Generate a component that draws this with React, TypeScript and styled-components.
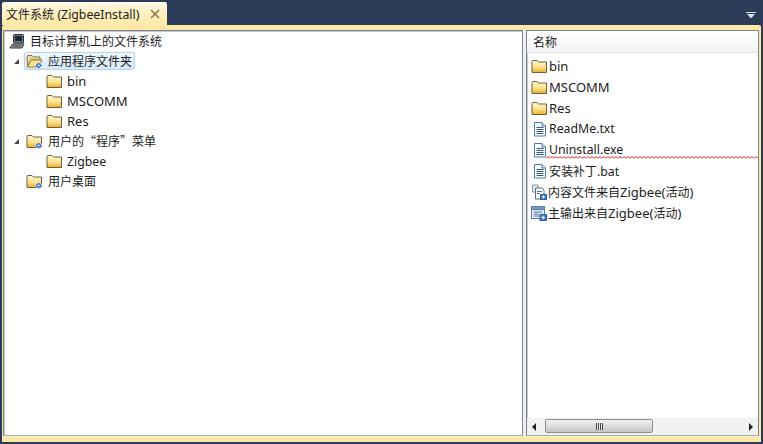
import styled, { createGlobalStyle } from "styled-components";

const Global = createGlobalStyle`
  html, body { margin: 0; padding: 0; background: #2b3b58; }
  body { font-family: "Noto Sans", "Noto Sans CJK SC", sans-serif; font-size: 13px; color: #1c1c1c; }
`;

const Page = styled.div`
  width: 763px;
  height: 444px;
  box-sizing: border-box;
  padding: 0 2px 2px;
  background: #2b3b58;
  display: flex;
  flex-direction: column;
  overflow: hidden;
`;

const TabStrip = styled.div`
  height: 25px;
  flex: none;
  box-sizing: border-box;
  padding-top: 2px;
  display: flex;
  align-items: stretch;
  justify-content: space-between;
`;

const Tab = styled.div`
  width: 165px;
  box-sizing: border-box;
  padding: 0 7px 0 4px;
  display: flex;
  align-items: center;
  justify-content: space-between;
  background: linear-gradient(#fffbe9, #fff0c2 45%, #ffe8a6);
  border-radius: 2px 2px 0 0;
  white-space: nowrap;
`;

const TabMenu = styled.div`
  width: 13px;
  margin-right: 2px;
  padding-top: 4px;
  display: flex;
  align-items: center;
`;

const Doc = styled.div`
  flex: 1;
  min-height: 0;
  box-sizing: border-box;
  padding: 5px 2px 6px 1px;
  background: #ffe8a6;
  border-radius: 2px 2px 0 0;
  display: flex;
`;

const Panes = styled.div`
  display: flex;
  flex: 1;
  min-width: 0;
  background: #f0f0f0;
  gap: 3px;
`;

const Pane = styled.div<{ $width?: number }>`
  ${(p) => (p.$width ? `width: ${p.$width}px; flex: none;` : "flex: 1;")}
  box-sizing: border-box;
  border: 1px solid #7b818d;
  border-bottom-color: #aab0a8;
  box-shadow: inset 1px 1px 0 #c4c8cf, 0 1px 0 #eef3e6;
  background: #fff;
  display: flex;
  flex-direction: column;
  min-width: 0;
`;

const Tree = styled.div`
  padding: 0 0 0 3px;
`;

const TreeRow = styled.div<{ $indent: number }>`
  height: 20px;
  display: flex;
  align-items: center;
  padding-left: ${(p) => p.$indent}px;
`;

const Arrow = styled.span`
  width: 0;
  height: 0;
  margin-right: 5px;
  border-left: 5px solid transparent;
  border-bottom: 5px solid #444;
`;

const Label = styled.div<{ $selected?: boolean }>`
  display: flex;
  align-items: center;
  gap: 4px;
  height: 18px;
  box-sizing: border-box;
  padding: 0 2px 0 1px;
  white-space: nowrap;
  border: 1px solid ${(p) => (p.$selected ? "#b4d3ec" : "transparent")};
  border-radius: 2px;
  background: ${(p) => (p.$selected ? "linear-gradient(#f0f7fd, #d7e9f8)" : "none")};
`;

const Han = styled.span`
  font-family: "Noto Sans CJK SC", sans-serif;
  font-size: 12px;
  line-height: 16px;
`;

const Narrow = styled.span`
  font-size: 12.3px;
`;

const ListHeader = styled.div`
  height: 22px;
  flex: none;
  box-sizing: border-box;
  padding: 1px 6px 0;
  display: flex;
  align-items: center;
  background: linear-gradient(#fff, #f2f3f5);
  border-bottom: 1px solid #e3e5e8;
`;

const List = styled.div`
  flex: 1;
  padding: 2px 0 0 4px;
`;

const ListRow = styled.div`
  position: relative;
  height: 21px;
  display: flex;
  align-items: center;
  gap: 1px;
  white-space: nowrap;
`;

const Squiggle = styled.svg`
  position: absolute;
  left: 15px;
  bottom: 1px;
  width: 212px;
  height: 3px;
`;

const ScrollBar = styled.div`
  height: 17px;
  flex: none;
  display: flex;
  align-items: center;
  justify-content: space-between;
  padding: 0 5px;
  background: #f1f1f1;
  position: relative;
`;

const ScrollArrow = styled.span<{ $dir: "left" | "right" }>`
  width: 0;
  height: 0;
  border-top: 4px solid transparent;
  border-bottom: 4px solid transparent;
  ${(p) => (p.$dir === "left" ? "border-right: 4px solid #222;" : "border-left: 4px solid #222;")}
`;

const Thumb = styled.div`
  position: absolute;
  left: 18px;
  top: 1px;
  width: 106px;
  height: 12px;
  border: 1px solid #8f8f8f;
  border-radius: 2px;
  background: linear-gradient(#f4f4f4, #dcdcdc 50%, #c4c4c4);
  display: flex;
  align-items: center;
  justify-content: center;
`;

const Grip = styled.span`
  width: 7px;
  height: 7px;
  background: repeating-linear-gradient(90deg, #444 0 1px, #eee 1px 2px);
`;

// icons
const Folder = ({ badge }: { badge?: boolean }) => (
  <svg width={badge ? 18 : 17} height="16" viewBox={badge ? "0 0 18 16" : "0 0 17 16"} style={{ flex: "none" }}>
    <defs>
      <linearGradient id="fold" x1="0" y1="0" x2="0" y2="1">
        <stop offset="0" stopColor="#fff9d8" />
        <stop offset="0.55" stopColor="#fde28c" />
        <stop offset="1" stopColor="#e8ac30" />
      </linearGradient>
    </defs>
    <path d="M1 3.5 L1.5 2.5 H6 L7.5 4 H15.5 V14.5 H1 Z" fill="url(#fold)" stroke="#6f6038" strokeWidth="1" />
    {badge && (
      <g>
        <path d="M12.5 9 L16.5 12.5 L12.5 16 L9 12.5 Z" fill="#2f6fc4" stroke="#fff" strokeWidth="0.8" />
        <circle cx="12.6" cy="12.5" r="1" fill="#fff" />
      </g>
    )}
  </svg>
);

const OpenFolder = () => (
  <svg width="18" height="16" viewBox="0 0 18 16" style={{ flex: "none" }}>
    <path d="M1 4 L1.5 2.5 H6 L7.5 4 H14 V7 H5 L1.5 13.5 Z" fill="#e8d8a0" stroke="#8a7440" />
    <path d="M1.5 14 L5 7 H16 L13 14 Z" fill="#fbe08a" stroke="#9a8242" />
    <path d="M12.5 9 L16.5 12.5 L12.5 16 L9 12.5 Z" fill="#2f6fc4" stroke="#fff" strokeWidth="0.8" />
    <circle cx="12.6" cy="12.5" r="1" fill="#fff" />
  </svg>
);

const Computer = () => (
  <svg width="17" height="16" viewBox="0 0 17 16" style={{ flex: "none" }}>
    <rect x="4.5" y="1.5" width="10" height="8.5" rx="1" fill="#6f7a86" stroke="#333" />
    <rect x="6" y="3" width="7" height="5" fill="#1d2a3a" />
    <path d="M3.5 11 H15 L13 15 H0.8 Z" fill="#a7aeb6" stroke="#333" />
    <path d="M3.5 13 H12.5" stroke="#333" />
  </svg>
);

const DocIcon = () => (
  <svg width="17" height="16" viewBox="-1 0 17 16" style={{ flex: "none" }}>
    <path d="M2.5 1.5 H10 L13.5 5 V15 H2.5 Z" fill="#fafcff" stroke="#4d7cae" />
    <path d="M10 1.5 V5 H13.5" fill="#cfe0f2" stroke="#4d7cae" />
    <path d="M4.5 6.5 H11.5 M4.5 8.5 H11.5 M4.5 10.5 H11.5 M4.5 12.5 H11.5" stroke="#35597f" />
  </svg>
);

const ContentIcon = () => (
  <svg width="16" height="16" viewBox="0 0 16 16" style={{ flex: "none" }}>
    <path d="M1.5 1 H7 V8 H1.5 Z" fill="#e6eef6" stroke="#7f95aa" />
    <path d="M4.5 4 H11 L13 6 V15 H4.5 Z" fill="#fff" stroke="#546f8c" />
    <path d="M6 7.5 H11 M6 9.5 H9" stroke="#546f8c" />
    <path d="M9.5 10.5 H15.5 V15.5 H9.5 Z" fill="#3b7cc9" stroke="#2a5f9f" />
    <path d="M11 13 H14 M12.5 11.5 V14.5" stroke="#fff" />
  </svg>
);

const OutputIcon = () => (
  <svg width="16" height="16" viewBox="0 0 16 16" style={{ flex: "none" }}>
    <rect x="0.5" y="1.5" width="13" height="12" fill="#dbe7f3" stroke="#5b7fa6" />
    <rect x="0.5" y="1.5" width="13" height="3" fill="#6f97c4" stroke="#5b7fa6" />
    <path d="M3 7 H11 M3 9 H8 M3 11 H8" stroke="#6a7f96" />
    <path d="M9 9.5 H15.5 V15.5 H9 Z" fill="#3b7cc9" stroke="#2a5f9f" />
    <path d="M10.5 12.5 H14 M12.2 10.8 V14.2" stroke="#fff" />
  </svg>
);

const Close = () => (
  <svg width="10" height="10" viewBox="0 0 10 10">
    <path d="M1 1 L9 9 M9 1 L1 9" stroke="#8b7a52" strokeWidth="1.6" />
  </svg>
);

const App = () => (
  <>
    <Global />
    <Page>
      <TabStrip>
        <Tab>
          <span><Han>文件系统</Han> <Narrow>(ZigbeeInstall)</Narrow></span>
          <Close />
        </Tab>
        <TabMenu>
          <svg width="10" height="7" viewBox="0 0 10 7">
            <path d="M0 0 H10 V1 H0 Z M1 2 H9 L5 6.5 Z" fill="#d7deea" />
          </svg>
        </TabMenu>
      </TabStrip>
      <Doc>
        <Panes>
          <Pane>
            <Tree>
              <TreeRow $indent={0}>
                <Label><Computer /><Han>目标计算机上的文件系统</Han></Label>
              </TreeRow>
              <TreeRow $indent={7}>
                <Arrow />
                <Label $selected><OpenFolder /><Han>应用程序文件夹</Han></Label>
              </TreeRow>
              <TreeRow $indent={37}><Label><Folder /><span>bin</span></Label></TreeRow>
              <TreeRow $indent={37}><Label><Folder /><span>MSCOMM</span></Label></TreeRow>
              <TreeRow $indent={37}><Label><Folder /><span>Res</span></Label></TreeRow>
              <TreeRow $indent={7}>
                <Arrow />
                <Label><Folder badge /><Han>用户的“程序”菜单</Han></Label>
              </TreeRow>
              <TreeRow $indent={37}><Label><Folder /><Narrow>Zigbee</Narrow></Label></TreeRow>
              <TreeRow $indent={17}><Label><Folder badge /><Han>用户桌面</Han></Label></TreeRow>
            </Tree>
          </Pane>
          <Pane $width={233}>
            <ListHeader><Han>名称</Han></ListHeader>
            <List>
              <ListRow><Folder /><span>bin</span></ListRow>
              <ListRow><Folder /><span>MSCOMM</span></ListRow>
              <ListRow><Folder /><span>Res</span></ListRow>
              <ListRow><DocIcon /><Narrow>ReadMe.txt</Narrow></ListRow>
              <ListRow>
                <DocIcon /><Narrow>Uninstall.exe</Narrow>
                <Squiggle viewBox="0 0 212 3" preserveAspectRatio="none">
                  <defs>
                    <pattern id="wave" width="4" height="3" patternUnits="userSpaceOnUse">
                      <path d="M0 2.5 L2 0.5 L4 2.5" fill="none" stroke="#d81818" />
                    </pattern>
                  </defs>
                  <rect width="212" height="3" fill="url(#wave)" />
                </Squiggle>
              </ListRow>
              <ListRow><DocIcon /><span><Han>安装补丁</Han><Narrow>.bat</Narrow></span></ListRow>
              <ListRow><ContentIcon /><span><Han>内容文件来自</Han>Zigbee(<Han>活动</Han>)</span></ListRow>
              <ListRow><OutputIcon /><span><Han>主输出来自</Han>Zigbee(<Han>活动</Han>)</span></ListRow>
            </List>
            <ScrollBar>
              <ScrollArrow $dir="left" />
              <Thumb><Grip /></Thumb>
              <ScrollArrow $dir="right" />
            </ScrollBar>
          </Pane>
        </Panes>
      </Doc>
    </Page>
  </>
);

export default App;
